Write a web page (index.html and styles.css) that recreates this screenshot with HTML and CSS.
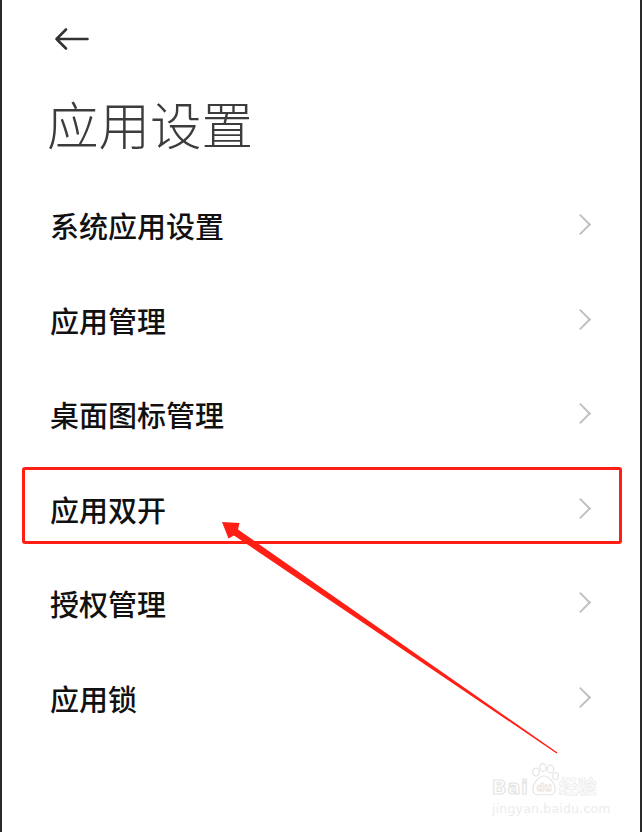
FILE: index.html
```html
<!DOCTYPE html>
<html lang="zh-CN">
<head>
    <meta charset="UTF-8">
    <meta name="viewport" content="width=device-width, initial-scale=1.0">
    <title>应用设置</title>
    <link rel="stylesheet" href="styles.css">
</head>
<body>

    <div class="phone">
        <div class="topbar">
            <svg class="back" width="36" height="24" viewBox="0 0 36 24">
                <path d="M34.5 12H3.5M13 2.5L3.5 12L13 21.5" fill="none" stroke="#333" stroke-width="2.6" stroke-linecap="round" stroke-linejoin="round"/>
            </svg>
        </div>

        <h1 class="title">应用设置</h1>

        <ul class="menu">
            <li class="menu-item"><span>系统应用设置</span><i class="chevron"></i></li>
            <li class="menu-item"><span>应用管理</span><i class="chevron"></i></li>
            <li class="menu-item"><span>桌面图标管理</span><i class="chevron"></i></li>
            <li class="menu-item marked"><span>应用双开</span><i class="chevron"></i></li>
            <li class="menu-item"><span>授权管理</span><i class="chevron"></i></li>
            <li class="menu-item"><span>应用锁</span><i class="chevron"></i></li>
        </ul>

        <!-- annotation arrow pointing at the marked row -->
        <svg class="pointer" width="638" height="832" viewBox="2 0 638 832">
            <polygon points="222,522 239.5,523 238,529.5 557.4,752.6 556.6,753.4 234,535.5 228.5,538.5" fill="#ff1f14"/>
        </svg>

        <div class="watermark">
            <div class="wm-logo">
                <span class="wm-bai">Bai</span>
                <svg class="wm-paw" width="30" height="34" viewBox="0 0 30 34">
                    <g fill="#fff" stroke="#e4e4e4" stroke-width="1.2">
                        <ellipse cx="7" cy="9" rx="3.2" ry="4"/>
                        <ellipse cx="14" cy="4.5" rx="3.2" ry="3.8"/>
                        <ellipse cx="21.5" cy="6" rx="3.2" ry="3.8"/>
                        <ellipse cx="26.5" cy="13" rx="2.8" ry="3.5"/>
                        <path d="M15 13C9 13 3 22 4 28C5 33 11 32 15 31C19 32 25 33 26 28C27 22 21 13 15 13Z"/>
                    </g>
                    <text x="15" y="28" text-anchor="middle" class="wm-du">du</text>
                </svg>
                <span class="wm-cn">经验</span>
            </div>
            <div class="wm-url">jingyan.baidu.com</div>
        </div>
    </div>

</body>
</html>
```

FILE: styles.css
```css
body {
    margin: 0;
    background-color: #fff;
}

.phone {
    position: relative;
    height: 832px;
    box-sizing: border-box;
    border-left: 2px solid #2a2a2a;
    border-right: 2px solid #2a2a2a;
    overflow: hidden;
    font-family: "Noto Sans CJK SC", sans-serif;
}

.topbar {
    padding: 27px 0 0 51px;
}

.back {
    display: block;
}

.title {
    margin: 41px 0 0 45px;
    font-size: 51.5px;
    line-height: 61px;
    font-weight: 300;
    color: #3c3c3c;
}

.menu {
    list-style: none;
    margin: 25px 0 0;
    padding: 0;
}

.menu-item {
    position: relative;
    display: flex;
    justify-content: space-between;
    align-items: center;
    height: 94.5px;
    padding: 0 50px 0 48px;
    font-size: 29px;
    font-weight: 500;
    color: #111;
}

.chevron {
    width: 14px;
    height: 24px;
}

.chevron::before {
    content: "";
    display: block;
    width: 15px;
    height: 15px;
    margin: 4px 0 0 -3px;
    border-top: 2px solid #c0c0c0;
    border-right: 2px solid #c0c0c0;
    transform: rotate(45deg);
    box-sizing: border-box;
}

/* red annotation frame */
.marked::after {
    content: "";
    position: absolute;
    left: 20px;
    top: 5.5px;
    width: 600px;
    height: 77px;
    box-sizing: border-box;
    border: 3px solid #ff1f14;
    border-radius: 3px;
}

.pointer {
    position: absolute;
    left: 0;
    top: 0;
    pointer-events: none;
}

.watermark {
    position: absolute;
    left: 490px;
    top: 762px;
    color: #e4e4e4;
    font-family: "DejaVu Sans", sans-serif;
}

.wm-logo {
    display: flex;
    align-items: flex-end;
    height: 35px;
}

.wm-bai {
    font-size: 19px;
    font-weight: bold;
    color: #fff;
    -webkit-text-stroke: 1.2px #e4e4e4;
    line-height: 20px;
    letter-spacing: 1px;
}

.wm-paw {
    display: block;
}

.wm-du {
    font-size: 11px;
    font-weight: bold;
    fill: #fff;
    stroke: #e4e4e4;
    stroke-width: 0.8;
}

.wm-cn {
    font-family: "Noto Sans CJK SC", sans-serif;
    font-size: 19px;
    font-weight: bold;
    color: #fff;
    -webkit-text-stroke: 0.6px #e8e8e8;
    line-height: 22px;
}

.wm-url {
    margin-top: 5px;
    font-size: 12.5px;
    line-height: 14px;
    color: #ececec;
    letter-spacing: 0.2px;
}
```
